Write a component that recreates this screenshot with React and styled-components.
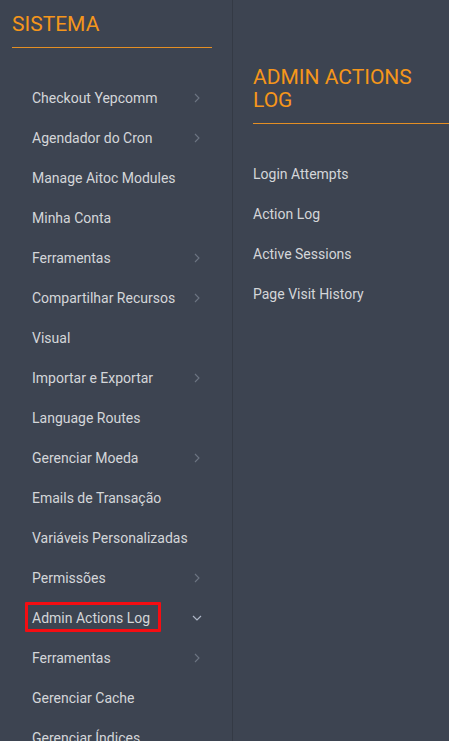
import React from "react";
import styled, { createGlobalStyle } from "styled-components";

const Global = createGlobalStyle`
  html, body { margin: 0; padding: 0; background: #3d4451; }
  body { font-family: Roboto, "Noto Sans", sans-serif; overflow: hidden; }
  * { box-sizing: border-box; }
`;

const Layout = styled.div`
  display: flex;
  width: 449px;
  height: 741px;
  overflow: hidden;
  background: #3d4451;
`;

const Left = styled.nav`
  width: 233px;
  flex: none;
  border-right: 1px solid #343a45;
  padding: 12px 20px 0 12px;
`;

const Right = styled.section`
  flex: 1;
  padding: 66px 0 0 20px;
  overflow: hidden;
`;

const Heading = styled.h2`
  margin: 0;
  font-weight: 400;
  font-size: 21px;
  line-height: ${(p) => (p.$sub ? "23px" : "24px")};
  color: #f5961b;
  text-transform: uppercase;
  padding: 0 0 11px;
  border-bottom: 1px solid #e48f24;
`;

const List = styled.ul`
  list-style: none;
  margin: 30px 0 0;
  padding: 0;
`;

const Item = styled.li`
  height: 40px;
  display: flex;
  align-items: center;
  padding-left: ${(p) => (p.$sub ? "0" : "20px")};
  padding-right: 10px;
  font-size: 14px;
  color: #d4d6d9;
  position: relative;
`;

const Label = styled.span`
  flex: 1;
  white-space: nowrap;
`;

const Active = styled.span`
  position: absolute;
  left: 13px;
  top: 4px;
  width: 136px;
  height: 30px;
  border: 3px solid #f50d12;
  border-radius: 1px;
`;

const Chevron = ({ down }) => (
  <svg width="10" height="10" viewBox="0 0 10 10">
    {down ? (
      <polyline points="1,3 5,7 9,3" fill="none" stroke="#aeb6c6" strokeWidth="1.2" />
    ) : (
      <polyline points="3,1 7,5 3,9" fill="none" stroke="#6d7583" strokeWidth="1.1" />
    )}
  </svg>
);

const items = [
  ["Checkout Yepcomm", "r"],
  ["Agendador do Cron", "r"],
  ["Manage Aitoc Modules"],
  ["Minha Conta"],
  ["Ferramentas", "r"],
  ["Compartilhar Recursos", "r"],
  ["Visual"],
  ["Importar e Exportar", "r"],
  ["Language Routes"],
  ["Gerenciar Moeda", "r"],
  ["Emails de Transação"],
  ["Variáveis Personalizadas"],
  ["Permissões", "r"],
  ["Admin Actions Log", "d", true],
  ["Ferramentas", "r"],
  ["Gerenciar Cache"],
  ["Gerenciar Índices"],
];

const sub = ["Login Attempts", "Action Log", "Active Sessions", "Page Visit History"];

export default function App() {
  return (
    <>
      <Global />
      <Layout>
        <Left>
          <Heading>Sistema</Heading>
          <List>
            {items.map(([t, a, act], i) => (
              <Item key={i}>
                {act && <Active />}
                <Label>{t}</Label>
                {a && <Chevron down={a === "d"} />}
              </Item>
            ))}
          </List>
        </Left>
        <Right>
          <Heading $sub>Admin Actions Log</Heading>
          <List $sub>
            {sub.map((t) => (
              <Item $sub key={t}>
                <Label>{t}</Label>
              </Item>
            ))}
          </List>
        </Right>
      </Layout>
    </>
  );
}
